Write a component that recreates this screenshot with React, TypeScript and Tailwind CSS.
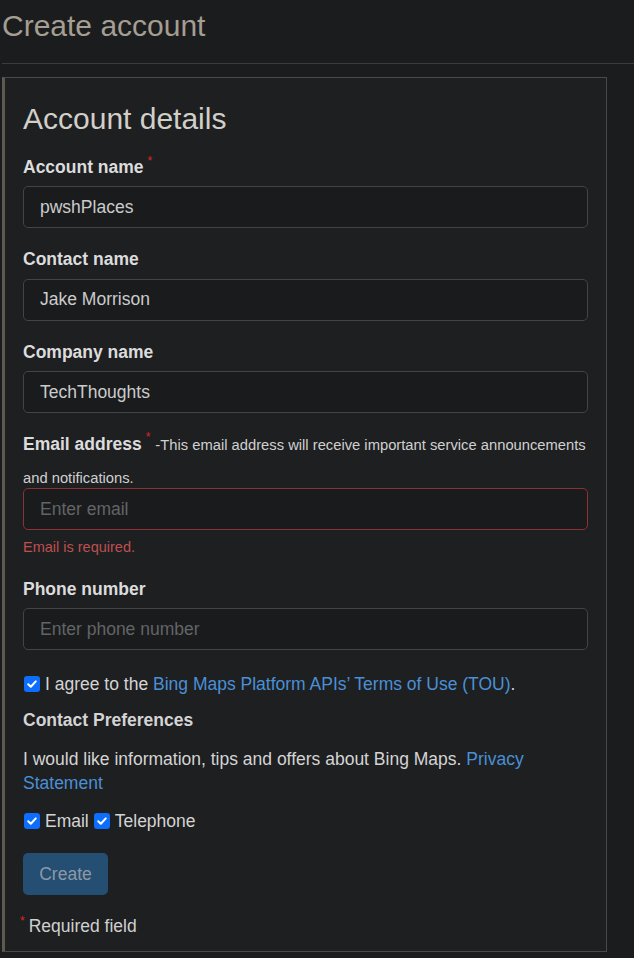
import type { ReactNode } from "react";

const Req = ({ lift = "align-[8px]" }: { lift?: string }) => (
  <span className={`ml-[4px] text-[12px] font-normal leading-none text-[#e02424] ${lift}`}>*</span>
);

function Check({ className = "" }: { className?: string }) {
  return (
    <span
      className={`inline-flex h-[16px] w-[16px] shrink-0 items-center justify-center rounded-[3px] bg-[#0d6efd] ${className}`}
    >
      <svg width="12" height="12" viewBox="0 0 12 12" fill="none">
        <path d="M2.2 6.3 4.8 8.8 9.8 3.4" stroke="#fff" strokeWidth="2" strokeLinecap="round" strokeLinejoin="round" />
      </svg>
    </span>
  );
}

function Input({ value, placeholder, invalid }: { value?: string; placeholder?: string; invalid?: boolean }) {
  return (
    <div
      className={`flex h-[42px] items-center rounded-[5px] border bg-[#1a1b1d] px-[16px] text-[17.5px] ${
        invalid ? "border-[#8e3034]" : "border-[#434447]"
      }`}
    >
      {value ? <span className="text-[#cbcbcb]">{value}</span> : <span className="text-[#636466]">{placeholder}</span>}
    </div>
  );
}

function Field({ label, required, value, placeholder }: { label: string; required?: boolean; value?: string; placeholder?: string }) {
  return (
    <div className="mb-[18px]">
      <div className="mb-[6px] text-[17.5px] font-bold leading-[26.25px] text-[#dcdcdc]">
        {label}
        {required && <Req />}
      </div>
      <Input value={value} placeholder={placeholder} />
    </div>
  );
}

const Link = ({ children }: { children: ReactNode }) => <span className="text-[#4a90d6]">{children}</span>;

export default function App() {
  return (
    <div className="min-h-[958px] bg-[#1b1c1e] pl-[2px] font-['Liberation_Sans',Arial,sans-serif]">
      <h1 className="pt-[8px] text-[30px] leading-[36px] text-[#a59e92]">Create account</h1>
      <div className="mt-[19px] h-px bg-[#3b3c3e]" />

      <div className="mt-[13px] w-[605px] border border-l-[3px] border-[#48494b] border-l-[#5f5a50] bg-[#1e1f21] pb-[12px] pl-[18px] pr-[18px] pt-[23px]">
        <h2 className="mb-[17px] text-[30px] leading-[36px] text-[#d2cfc9]">Account details</h2>

        <Field label="Account name" required value="pwshPlaces" />
        <Field label="Contact name" value="Jake Morrison" />
        <Field label="Company name" value="TechThoughts" />

        <div className="-mt-[3px] mb-[18px]">
          <div className="-mb-[6px] text-[17.5px] leading-[32px] text-[#dcdcdc]">
            <span className="font-bold">Email address</span>
            <Req lift="align-[9px]" />
            <span className="ml-[5px] text-[14.75px] text-[#d0d0d0]">
              -This email address will receive important service announcements
            </span>{" "}
            <span className="text-[14.75px] text-[#d0d0d0]">and notifications.</span>
          </div>
          <Input placeholder="Enter email" invalid />
          <div className="mt-[6px] text-[14.5px] leading-[22px] text-[#bf4f4f]">Email is required.</div>
        </div>

        <Field label="Phone number" placeholder="Enter phone number" />

        <div className="-mt-[16px] pt-[19px] flex items-center text-[17.5px] leading-[26.25px] text-[#d4d4d4]">
          <Check className="ml-[1px] mr-[5px]" />
          <span>
            I agree to the <Link>Bing Maps Platform APIs’ Terms of Use (TOU)</Link>.
          </span>
        </div>

        <div className="mt-[10px] text-[17.5px] font-bold leading-[26.25px] text-[#d4d4d4]">Contact Preferences</div>

        <p className="mt-[13px] text-[17.5px] leading-[24px] text-[#d4d4d4]">
          I would like information, tips and offers about Bing Maps. <Link>Privacy</Link> <Link>Statement</Link>
        </p>

        <div className="mt-[13px] flex items-center text-[17.5px] leading-[26.25px] text-[#d4d4d4]">
          <Check className="ml-[1px] mr-[5px]" />
          <span>Email</span>
          <Check className="ml-[5px] mr-[5px]" />
          <span>Telephone</span>
        </div>

        <button className="mt-[19px] flex h-[42px] w-[85px] items-center justify-center rounded-[5px] bg-[#244e72] text-[17.5px] text-[#8d9aa6]">
          Create
        </button>

        <div className="mt-[18px] text-[17.5px] leading-[26.25px] text-[#d0d0d0]">
          <span className="-ml-[3px] mr-[4px] align-[7px] text-[12px] leading-none text-[#e02424]">*</span>
          Required field
        </div>
      </div>
    </div>
  );
}
